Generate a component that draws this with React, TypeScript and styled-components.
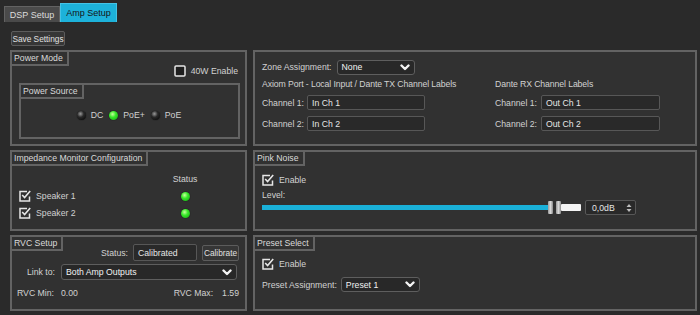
import { FC } from 'react'
import styled, { createGlobalStyle } from 'styled-components'

const Global = createGlobalStyle`
  body {
    margin: 0;
    background: #2a2a2a;
    color: #d2d2d2;
    font-family: "Liberation Sans", Arial, sans-serif;
    font-size: 8.7px;
  }
`

const Page = styled.div`
  width: 700px;
  height: 315px;
  overflow: hidden;
  background: #2a2a2a;
  white-space: nowrap;
`

const TabBar = styled.div`
  display: flex;
  align-items: flex-end;
  height: 22px;
  padding-left: 4px;
  box-sizing: border-box;
`

const Tab = styled.div<{ $active?: boolean }>`
  display: flex;
  align-items: center;
  justify-content: center;
  box-sizing: border-box;
  width: ${(p) => (p.$active ? 57 : 56)}px;
  height: ${(p) => (p.$active ? 19 : 16)}px;
  background: ${(p) => (p.$active ? '#1db2da' : '#4a4a4a')};
  color: ${(p) => (p.$active ? '#151515' : '#dcdcdc')};
  border: 1px solid ${(p) => (p.$active ? '#45c3e6' : '#626262')};
  border-bottom: none;
  font-size: 9px;
`

const Toolbar = styled.div`
  display: flex;
  padding: 9px 0 0 11px;
`

const Button = styled.div<{ $w: number; $h?: number }>`
  display: flex;
  align-items: center;
  justify-content: center;
  box-sizing: border-box;
  flex: none;
  width: ${(p) => p.$w}px;
  height: ${(p) => p.$h ?? 16}px;
  background: #363636;
  border: 1px solid #5c5c5c;
  border-radius: 2px;
  color: #e0e0e0;
  font-size: 8.3px;
`

const Grid = styled.div`
  display: grid;
  grid-template-columns: 237px 444px;
  grid-template-rows: 96px 81px 76px;
  column-gap: 6px;
  row-gap: 4px;
  margin: 4px 0 0 10px;
`

const Panel = styled.div`
  display: flex;
  flex-direction: column;
  box-sizing: border-box;
  background: #313131;
  border: 2px solid #636363;
  min-width: 0;
`

const Title = styled.div`
  align-self: flex-start;
  padding: 1px 4px 0 2px;
  line-height: 11px;
  border-right: 2px solid #636363;
  border-bottom: 2px solid #636363;
  color: #dadada;
`

const SubPanel = styled(Panel)`
  margin: 6px 5px 5px 7px;
  flex: 1;
  background: transparent;
`

const Row = styled.div<{ $mt?: number; $gap?: number }>`
  display: flex;
  align-items: center;
  gap: ${(p) => p.$gap ?? 5}px;
  margin-top: ${(p) => p.$mt ?? 0}px;
  min-height: 12px;
`

const EnableRow = styled(Row)`
  justify-content: flex-end;
  padding-right: 7px;
`

const LedRow = styled(Row)`
  justify-content: center;
  margin-top: 10px;
  gap: 5px;
`

const Led = styled.span<{ $on?: boolean }>`
  display: inline-block;
  width: 9px;
  height: 9px;
  border-radius: 50%;
  background: ${(p) =>
    p.$on
      ? 'radial-gradient(circle at 40% 35%, #c8ff9e 0, #38e82a 40%, #10a010 100%)'
      : 'radial-gradient(circle at 38% 32%, #9a9a9a 0, #2a2a2a 40%, #000 100%)'};
  box-shadow: 0 0 1px #000;
`

const LedLabel = styled.span`
  margin-right: 1px;
`

const Content = styled.div<{ $pl?: number; $pr?: number }>`
  display: flex;
  flex-direction: column;
  padding: 0 ${(p) => p.$pr ?? 7}px 0 ${(p) => p.$pl ?? 7}px;
`

const ZoneGrid = styled.div`
  display: grid;
  grid-template-columns: 233px 1fr;
  margin-top: 4px;
`

const ColHead = styled.div`
  line-height: 11px;
  margin-bottom: 5px;
  letter-spacing: -0.1px;
`

const ChannelRow = styled.div`
  display: flex;
  align-items: center;
  height: 15px;
  margin-bottom: 6px;
`

const FieldLabel = styled.span<{ $w?: number }>`
  display: inline-block;
  width: ${(p) => (p.$w ? `${p.$w}px` : 'auto')};
  flex: none;
`

const TextBox = styled.div<{ $w: number; $h?: number }>`
  display: flex;
  align-items: center;
  box-sizing: border-box;
  flex: none;
  width: ${(p) => p.$w}px;
  height: ${(p) => p.$h ?? 15}px;
  padding-left: 4px;
  background: #292929;
  border: 1px solid #575757;
  border-radius: 2px;
  color: #e6e6e6;
`

const SelectBox = styled(TextBox)`
  justify-content: space-between;
  padding-right: 4px;
  background: #282828;
  border-color: #5e5e5e;
  border-radius: 3px;
  color: #f2f2f2;
`

const StatusGrid = styled.div`
  display: grid;
  grid-template-columns: 146px 40px;
  grid-auto-rows: 12px;
  row-gap: 5px;
  padding-left: 7px;
  margin-top: 7px;
  align-items: center;
`

const Center = styled.div`
  display: flex;
  justify-content: center;
  align-items: center;
`

const SliderRow = styled.div`
  display: flex;
  align-items: center;
  height: 15px;
  margin-top: -1px;
`

const TrackFill = styled.div`
  width: 286px;
  height: 5px;
  background: #1ab0d8;
`

const Handle = styled.div`
  display: flex;
  gap: 3px;
  height: 13px;
`

const HandleBar = styled.div`
  width: 5px;
  height: 13px;
  border-radius: 1px;
  background: linear-gradient(to right, #9a9a9a, #d8d8d8 50%, #8a8a8a);
`

const TrackRest = styled.div`
  width: 20px;
  height: 7px;
  background: #f4f4f4;
  border-radius: 1px;
`

const SpinBox = styled(TextBox)`
  justify-content: space-between;
  padding: 0 3px 0 6px;
  margin-left: 4px;
`

const RvcTop = styled.div`
  display: flex;
  align-items: flex-start;
  padding-right: 6px;
`

const RvcStatus = styled.div`
  display: flex;
  align-items: center;
  gap: 5px;
  margin: 7px 0 0 auto;
`

const MinMax = styled.div`
  display: flex;
  justify-content: space-between;
  margin-top: 8px;
  padding: 0 6px 0 5px;
`

const Pair = styled.span<{ $gap: number }>`
  display: flex;
  gap: ${(p) => p.$gap}px;
`

const Chevron: FC = () => (
  <svg width='10' height='7' viewBox='0 0 10 7'>
    <polyline points='1.5,1.5 5,5 8.5,1.5' fill='none' stroke='#f4f4f4' strokeWidth='2.4' strokeLinecap='round' strokeLinejoin='round' />
  </svg>
)

const Check: FC<{ on?: boolean }> = ({ on }) =>
  on ? (
    <svg width='12' height='12' viewBox='0 0 12 12'>
      <path d='M8 1.5 H1 V11 H10.5 V6.5' fill='none' stroke='#e6e6e6' strokeWidth='1.5' />
      <path d='M3.2 5 L5.6 7.6 L11.2 1' fill='none' stroke='#e6e6e6' strokeWidth='1.6' />
    </svg>
  ) : (
    <svg width='12' height='12' viewBox='0 0 12 12'>
      <rect x='1' y='1' width='10' height='10' rx='1' fill='#1e1e1e' stroke='#e6e6e6' strokeWidth='1.5' />
    </svg>
  )

const Spin: FC = () => (
  <svg width='6' height='10' viewBox='0 0 6 10'>
    <path d='M3 1 L5.5 4 H0.5 Z M3 9 L5.5 6 H0.5 Z' fill='#bdbdbd' />
  </svg>
)

const Select: FC<{ w: number; h?: number; value: string }> = ({ w, h, value }) => (
  <SelectBox $w={w} $h={h}>
    <span>{value}</span>
    <Chevron />
  </SelectBox>
)

const CheckItem: FC<{ on?: boolean; label: string }> = ({ on, label }) => (
  <Row>
    <Check on={on} />
    <span>{label}</span>
  </Row>
)

export default function App() {
  return (
    <Page>
      <Global />
      <TabBar>
        <Tab>DSP Setup</Tab>
        <Tab $active>Amp Setup</Tab>
      </TabBar>
      <Toolbar>
        <Button $w={54} $h={15}>Save Settings</Button>
      </Toolbar>
      <Grid>
        <Panel>
          <Title>Power Mode</Title>
          <EnableRow $mt={-1}>
            <Check />
            <span>40W Enable</span>
          </EnableRow>
          <SubPanel>
            <Title>Power Source</Title>
            <LedRow>
              <Led />
              <LedLabel>DC</LedLabel>
              <Led $on />
              <LedLabel>PoE+</LedLabel>
              <Led />
              <LedLabel>PoE</LedLabel>
            </LedRow>
          </SubPanel>
        </Panel>

        <Panel>
          <Content>
            <Row $mt={7} style={{ height: 16 }}>
              <span>Zone Assignment:</span>
              <Select w={78} value='None' />
            </Row>
            <ZoneGrid>
              <div>
                <ColHead>Axiom Port - Local Input / Dante TX Channel Labels</ColHead>
                <ChannelRow>
                  <FieldLabel $w={45}>Channel 1:</FieldLabel>
                  <TextBox $w={118}>In Ch 1</TextBox>
                </ChannelRow>
                <ChannelRow>
                  <FieldLabel $w={45}>Channel 2:</FieldLabel>
                  <TextBox $w={118}>In Ch 2</TextBox>
                </ChannelRow>
              </div>
              <div>
                <ColHead>Dante RX Channel Labels</ColHead>
                <ChannelRow>
                  <FieldLabel $w={46}>Channel 1:</FieldLabel>
                  <TextBox $w={119}>Out Ch 1</TextBox>
                </ChannelRow>
                <ChannelRow>
                  <FieldLabel $w={46}>Channel 2:</FieldLabel>
                  <TextBox $w={119}>Out Ch 2</TextBox>
                </ChannelRow>
              </div>
            </ZoneGrid>
          </Content>
        </Panel>

        <Panel>
          <Title>Impedance Monitor Configuration</Title>
          <StatusGrid>
            <span />
            <Center>Status</Center>
            <CheckItem on label='Speaker 1' />
            <Center>
              <Led $on />
            </Center>
            <CheckItem on label='Speaker 2' />
            <Center>
              <Led $on />
            </Center>
          </StatusGrid>
        </Panel>

        <Panel>
          <Title>Pink Noise</Title>
          <Content>
            <Row $mt={8}>
              <Check on />
              <span>Enable</span>
            </Row>
            <Row $mt={3}>Level:</Row>
            <SliderRow>
              <TrackFill />
              <Handle>
                <HandleBar />
                <HandleBar />
              </Handle>
              <TrackRest />
              <SpinBox $w={51}>
                <span>0,0dB</span>
                <Spin />
              </SpinBox>
            </SliderRow>
          </Content>
        </Panel>

        <Panel>
          <RvcTop>
            <Title>RVC Setup</Title>
            <RvcStatus>
              <span>Status:</span>
              <TextBox $w={64} $h={17}>Calibrated</TextBox>
              <Button $w={37}>Calibrate</Button>
            </RvcStatus>
          </RvcTop>
          <Content $pl={15} $pr={0}>
            <Row $mt={3} $gap={6}>
              <span>Link to:</span>
              <Select w={176} h={16} value='Both Amp Outputs' />
            </Row>
          </Content>
          <MinMax>
            <Pair $gap={7}>
              <span>RVC Min:</span>
              <span>0.00</span>
            </Pair>
            <Pair $gap={9}>
              <span>RVC Max:</span>
              <span>1.59</span>
            </Pair>
          </MinMax>
        </Panel>

        <Panel>
          <Title>Preset Select</Title>
          <Content>
            <Row $mt={7}>
              <Check on />
              <span>Enable</span>
            </Row>
            <Row $mt={7} $gap={4}>
              <span>Preset Assignment:</span>
              <Select w={79} value='Preset 1' />
            </Row>
          </Content>
        </Panel>
      </Grid>
    </Page>
  )
}
